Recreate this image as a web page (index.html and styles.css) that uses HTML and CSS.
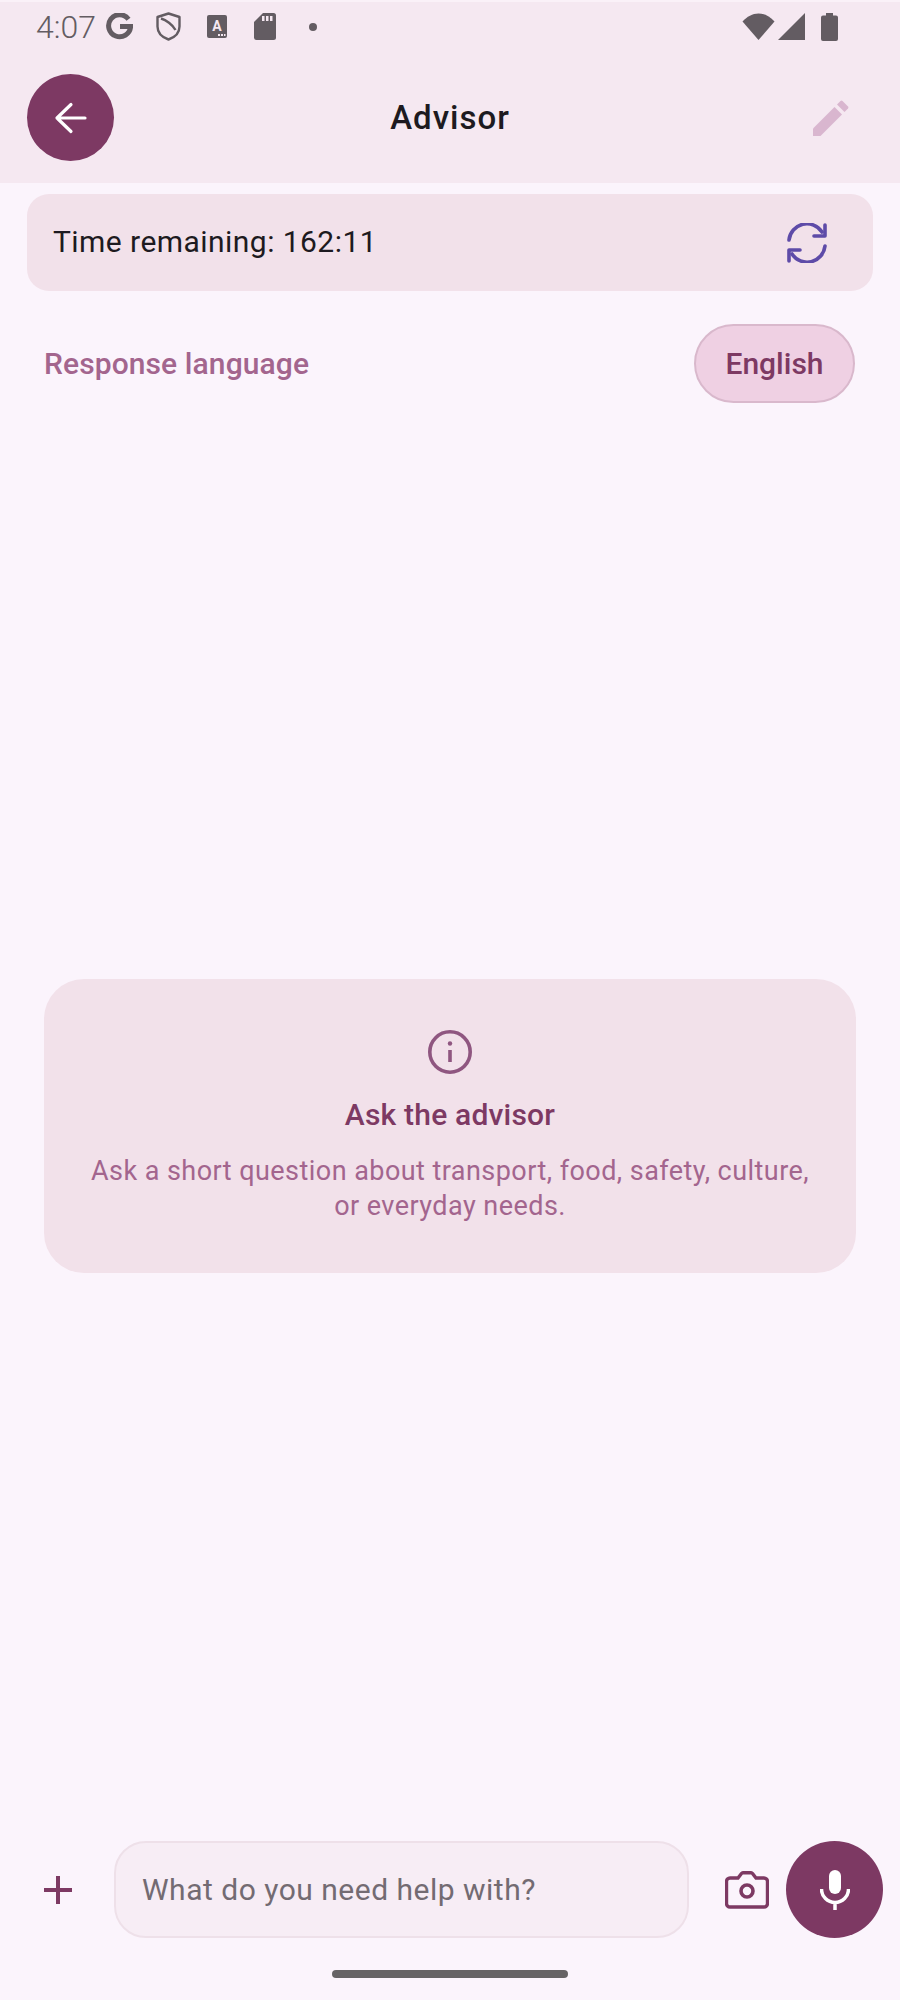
FILE: index.html
```html
<!DOCTYPE html>
<html lang="en">
<head>
  <meta charset="UTF-8" />
  <meta name="viewport" content="width=device-width, initial-scale=1.0" />
  <title>Advisor</title>
  <link rel="stylesheet" href="styles.css">
</head>
<body>
  <header class="top">
    <div class="status-bar">
      <span class="clock">4:07</span>
      <svg class="st-g" width="27" height="27" viewBox="0 0 27 27"><path d="M22.500 6.200A11 11 0 1 0 24.600 13.600H14" fill="none" stroke="#635c62" stroke-width="5"/></svg>
      <svg class="st-shield" width="25" height="29" viewBox="0 0 25 29"><path d="M12.500 1.500 23.500 5v9.500c0 6-4.400 10.700-11 13-6.600-2.300-11-7-11-13V5z" fill="none" stroke="#635c62" stroke-width="2.400" stroke-linejoin="round"/><path d="M5 6.500c5 1.500 11.500 6 14.500 11.500" fill="none" stroke="#635c62" stroke-width="2.400"/></svg>
      <svg class="st-a" width="20" height="23" viewBox="0 0 20 23"><rect width="20" height="23" rx="2" fill="#635c62"/><text x="10" y="15.500" text-anchor="middle" class="st-a-letter">A</text><path d="M11 19h2v2h-2zM14 19h2v2h-2zM17 19h1.500v2H17z" fill="#f5e8f1"/></svg>
      <svg class="st-sd" width="22" height="27" viewBox="0 0 22 27"><path d="M9 0h10.500A2.500 2.500 0 0 1 22 2.500v22a2.500 2.500 0 0 1-2.500 2.500h-17A2.500 2.500 0 0 1 0 24.500V9z" fill="#635c62"/><path d="M8 3h2.500v5H8zM12 3h2.500v5H12zM16 3h2.500v5H16z" fill="#f5e8f1"/></svg>
      <span class="st-dot"></span>
      <span class="status-spacer"></span>
      <svg class="st-wifi" width="33" height="27" viewBox="0 0 33 27"><path d="M16.500 27 0.500 8.500C5 3.500 10.500 0.500 16.500 0.500S28 3.500 32.500 8.500z" fill="#635c62"/></svg>
      <svg class="st-signal" width="27" height="27" viewBox="0 0 27 27"><path d="M27 0v27H0z" fill="#635c62"/></svg>
      <svg class="st-battery" width="17" height="28" viewBox="0 0 17 28"><path d="M5 0h7v2.500h3a2 2 0 0 1 2 2V26a2 2 0 0 1-2 2H2a2 2 0 0 1-2-2V4.500a2 2 0 0 1 2-2h3z" fill="#635c62"/></svg>
    </div>
    <div class="app-bar">
      <button class="back-btn">
        <svg width="34" height="34" viewBox="0 0 34 34"><path d="M31 17H3M17 3.500 3 17l14 13.500" fill="none" stroke="#fff" stroke-width="3.200" stroke-linecap="round" stroke-linejoin="round"/></svg>
      </button>
      <h1>Advisor</h1>
      <svg class="edit-icon" width="38" height="38" viewBox="0 0 38 38"><path d="M1 37V29.500L22.500 8l7.500 7.500L8.500 37z" fill="#d9b6cf"/><path d="M25 5.500 28.500 2a1.500 1.500 0 0 1 2 0l5.500 5.500a1.500 1.500 0 0 1 0 2L32.500 13z" fill="#d9b6cf"/></svg>
    </div>
  </header>

  <main class="content">
    <div class="timer-card">
      <span class="timer-text">Time remaining: 162:11</span>
      <svg class="refresh" width="40" height="40" viewBox="0 0 40 40"><g fill="none" stroke="#5e4ba8" stroke-width="3.600" stroke-linecap="round" stroke-linejoin="round"><path d="M2 17A18 18 0 0 1 35 9"/><path d="M38 2v11H27"/><path d="M38 23A18 18 0 0 1 5 31"/><path d="M2 38V27h11"/></g></svg>
    </div>

    <div class="lang-row">
      <span class="lang-label">Response language</span>
      <button class="lang-chip">English</button>
    </div>

    <div class="empty-wrap">
      <section class="empty-card">
        <svg class="info-icon" width="44" height="44" viewBox="0 0 44 44"><circle cx="22" cy="22" r="20.200" fill="none" stroke="#8f5680" stroke-width="3.600"/><path d="M22 20v12" stroke="#8f5680" stroke-width="3.600"/><circle cx="22" cy="13.500" r="2.200" fill="#8f5680"/></svg>
        <h2>Ask the advisor</h2>
        <p>Ask a short question about transport, food, safety, culture, or everyday needs.</p>
      </section>
    </div>

    <div class="composer">
      <svg class="plus" width="30" height="30" viewBox="0 0 30 30"><path d="M15 1v28M1 15h28" stroke="#7d3963" stroke-width="4"/></svg>
      <div class="input-box">What do you need help with?</div>
      <svg class="camera" width="44" height="38" viewBox="0 0 44 38"><path d="M5 7h8l3.500-4.500a2 2 0 0 1 1.500-.8h8a2 2 0 0 1 1.500.8L31 7h8a3.500 3.500 0 0 1 3.500 3.500v22A3.500 3.500 0 0 1 39 36H5a3.500 3.500 0 0 1-3.500-3.500v-22A3.500 3.500 0 0 1 5 7z" fill="none" stroke="#7d3963" stroke-width="3.400"/><circle cx="22" cy="20" r="6" fill="none" stroke="#7d3963" stroke-width="3.600"/></svg>
      <button class="mic-btn">
        <svg width="30" height="40" viewBox="0 0 30 40"><rect x="9" y="0" width="12" height="24" rx="6" fill="#fff"/><path d="M1.500 19a13.500 13.500 0 0 0 27 0M15 33v7" fill="none" stroke="#fff" stroke-width="3.500"/></svg>
      </button>
    </div>
    <div class="home-bar"></div>
  </main>
</body>
</html>
```

FILE: styles.css
```css
* {
  box-sizing: border-box;
  margin: 0;
  padding: 0;
}

body {
  width: 900px;
  height: 2000px;
  display: flex;
  flex-direction: column;
  font-family: 'Roboto', sans-serif;
  background-color: #fbf4fc;
  color: #1d1a20;
  overflow: hidden;
}

button {
  font-family: inherit;
  border: none;
}

.top {
  height: 183px;
  background-color: #f5e8f1;
  border-top: 2px solid #faf1f8;
}

.status-bar {
  height: 49px;
  display: flex;
  align-items: center;
  padding-left: 36px;
  padding-right: 62px;
  color: #635c62;
}

.clock { font-size: 32px; font-weight: 300; width: 58px; flex: none; white-space: nowrap; }
.st-g { margin-left: 12px; }
.st-shield { margin-left: 23px; }
.st-a { margin-left: 26px; }
.st-a-letter { font-family: 'Roboto', sans-serif; font-size: 14px; font-weight: 700; fill: #f5e8f1; }
.st-sd { margin-left: 27px; }
.st-dot { width: 8px; height: 8px; border-radius: 50%; background: #635c62; margin-left: 33px; }
.status-spacer { flex: 1; }
.st-signal { margin-left: 3px; }
.st-battery { margin-left: 16px; }

.app-bar {
  display: flex;
  align-items: center;
  justify-content: space-between;
  padding: 23px 27px 0 27px;
  position: relative;
}

.back-btn {
  width: 87px;
  height: 87px;
  border-radius: 50%;
  background-color: #7d3963;
  display: flex;
  align-items: center;
  justify-content: center;
}

.app-bar h1 {
  position: absolute;
  left: 0;
  right: 0;
  text-align: center;
  font-size: 33px;
  font-weight: 500;
  letter-spacing: 1px;
  color: #1d1a20;
}

.edit-icon { margin-right: 23px; }

.content {
  flex: 1;
  display: flex;
  flex-direction: column;
  min-height: 0;
}

.timer-card {
  margin: 11px 27px 0 27px;
  height: 97px;
  border-radius: 22px;
  background-color: #f2e1ea;
  display: flex;
  align-items: center;
  justify-content: space-between;
  padding: 0 46px 0 26px;
}

.timer-text { font-size: 30px; letter-spacing: 0.45px; padding-bottom: 2px; }

.lang-row {
  display: flex;
  align-items: center;
  justify-content: space-between;
  margin-top: 33px;
  padding: 0 45px 0 44px;
}

.lang-label { font-size: 30px; font-weight: 500; color: #a3658e; letter-spacing: 0.1px; }

.lang-chip {
  width: 161px;
  height: 79px;
  border-radius: 40px;
  border: 2px solid #d9b8cc;
  background-color: #efd0e3;
  color: #7d3963;
  font-size: 30px;
  font-weight: 500;
}

.empty-wrap {
  flex: 1;
  display: flex;
  flex-direction: column;
  justify-content: center;
  padding: 8px 44px 0 44px;
}

.empty-card {
  height: 294px;
  border-radius: 40px;
  background-color: #f2e1ea;
  display: flex;
  flex-direction: column;
  align-items: center;
  padding-top: 51px;
  text-align: center;
}

.empty-card h2 {
  margin-top: 23px;
  font-size: 30px;
  font-weight: 500;
  letter-spacing: 0.2px;
  color: #7d3963;
}

.empty-card p {
  margin-top: 22px;
  width: 730px;
  font-size: 27px;
  line-height: 35px;
  letter-spacing: 0.45px;
  color: #a3658e;
}

.composer {
  display: flex;
  align-items: center;
  padding-left: 43px;
}

.plus { flex: none; }

.input-box {
  margin-left: 41px;
  width: 575px;
  height: 97px;
  border-radius: 32px;
  border: 2px solid #eee0e9;
  background-color: #f7edf5;
  display: flex;
  align-items: center;
  padding-left: 26px;
  font-size: 30px;
  letter-spacing: 0.5px;
  color: #736b72;
}

.camera { margin-left: 36px; }

.mic-btn {
  margin-left: 17px;
  width: 97px;
  height: 97px;
  border-radius: 50%;
  background-color: #7d3963;
  display: flex;
  align-items: center;
  justify-content: center;
}

.home-bar {
  width: 236px;
  height: 8px;
  border-radius: 4px;
  background-color: #666365;
  margin: 32px auto 22px auto;
}
```
